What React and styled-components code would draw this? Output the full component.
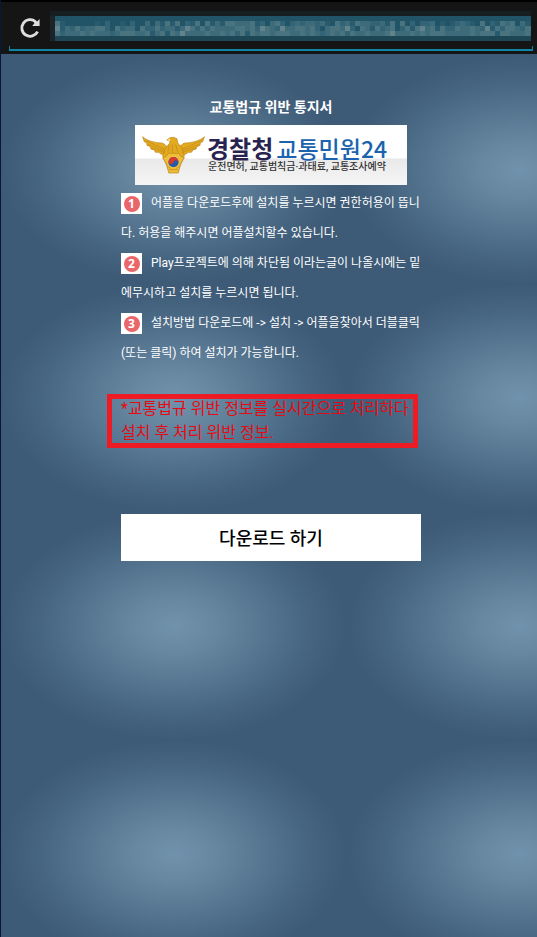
import React from "react";
import styled, { createGlobalStyle } from "styled-components";

const GlobalStyle = createGlobalStyle`
	* {
		box-sizing: border-box;
	}
	body {
		margin: 0;
		background: #3d5a76;
		font-family: Roboto, "Noto Sans CJK KR", sans-serif;
	}
`;

const Page = styled.div`
	display: flex;
	flex-direction: column;
	min-height: 100vh;
	border-left: 1px solid #0b1736;
`;

const BrowserBar = styled.header`
	background-color: #151515;
	border-top: 2px solid #000;
	padding: 9px 4px 3px 8px;
`;

const AddressRow = styled.div`
	display: flex;
	align-items: flex-start;
	gap: 6px;
	height: 35px;
	padding-left: 7px;
`;

const AddressLine = styled.div`
	height: 5px;
	border: 1px solid #13809d;
	border-top: 0;
	border-bottom: 2px solid #0e86a6;
`;

const ReloadButton = styled.button`
	display: flex;
	border: 0;
	padding: 3px 0 0;
	background: none;
	svg {
		width: 28px;
		height: 28px;
	}
`;

const MaskedAddress = styled.div`
	flex: 1;
	min-width: 0;
	height: 30px;
	margin-right: 2px;
	overflow: hidden;
	svg {
		display: block;
	}
`;

const Content = styled.main`
	flex: 1;
	display: flex;
	flex-direction: column;
	align-items: center;
	padding: 41px 0 40px 4px;
	background-image: radial-gradient(
		closest-side,
		#7192ac 0%,
		#6787a1 24%,
		#567590 52%,
		#466581 78%,
		#3d5a76 100%
	);
	background-size: 346px 228px;
	background-position: 0 2px;
`;

const Title = styled.h1`
	margin: 0 0 6px;
	font-size: 14px;
	line-height: 24px;
	font-weight: bold;
	color: #fff;
`;

const Banner = styled.div`
	display: flex;
	align-items: center;
	gap: 2px;
	width: 272px;
	height: 60px;
	padding-left: 7px;
	background: linear-gradient(#fff 33px, #e9e9e9 34px, #f5f5f5);
	white-space: nowrap;
`;

const BannerName = styled.div`
	display: flex;
	gap: 3px;
	font-family: "Noto Sans CJK KR", sans-serif;
	font-size: 24px;
	line-height: 22px;
	font-weight: bold;
	color: #29244f;
	span {
		font-size: 23px;
		font-weight: 500;
		color: #1b63ae;
	}
`;

const BannerText = styled.div`
	margin-top: 2px;
	padding-left: 1px;
	font-size: 10px;
	line-height: 12px;
	font-weight: 500;
	color: #333;
`;

const Steps = styled.section`
	width: 300px;
	margin-top: 3px;
`;

const Step = styled.p`
	margin: 0;
	font-size: 12px;
	line-height: 30px;
	color: #fff;
`;

const Badge = styled.span`
	display: inline-flex;
	align-items: center;
	justify-content: center;
	width: 21px;
	height: 21px;
	margin-right: 9px;
	background-color: #fff;
	vertical-align: middle;
`;

const Dot = styled.span`
	width: 16px;
	height: 16px;
	border-radius: 50%;
	background-color: #e9666a;
	font-family: "Open Sans", sans-serif;
	font-size: 12px;
	line-height: 16px;
	font-weight: bold;
	text-align: center;
`;

const Notice = styled.p`
	position: relative;
	width: 300px;
	margin: 29px 0 69px;
	font-size: 16px;
	line-height: 24px;
	color: #e60b12;
	&::after {
		content: "";
		position: absolute;
		inset: -3px 3px -3px -14px;
		border: 5px solid #ed1c24;
	}
`;

const DownloadButton = styled.button`
	width: 300px;
	height: 47px;
	border: 0;
	padding: 0 0 2px;
	background-color: #fff;
	font-family: inherit;
	font-size: 18px;
	font-weight: 500;
	color: #000;
`;

// brightness of each 5px block, one string per row
const MASK_ROWS = [
	"410000001020010200303141402140413144333412034202323323104231433223140402022301012321040214340310",
	"513242334420423304224233135424243333443425432533443420344352043142340241453414224334325142443244",
	"423334343332344433413414353333433434241434434443343432343424334333453334343444333334344414433343",
];
const MASK_COLORS = ["#225468", "#285b6e", "#336475", "#3e6b7a", "#4a7380", "#62838c"];

const AddressMask = () => (
	<svg width="100%" height="30" role="img" aria-label="Masked address">
		<rect width="100%" height="30" fill="#171e22" />
		<rect x="5" y="5" width="100%" height="20" fill="#225468" />
		<rect x="5" y="25" width="100%" height="5" fill="#1e4756" />
		<rect y="5" width="5" height="25" fill="#1b2529" />
		{MASK_ROWS.map((row, y) =>
			row.split("").map((level, x) => (
				<rect
					key={`${x}-${y}`}
					x={5 + x * 5}
					y={10 + y * 5}
					width="5"
					height="5"
					fill={MASK_COLORS[level]}
				/>
			))
		)}
	</svg>
);

const ReloadIcon = () => (
	<svg viewBox="0 0 28 28" fill="none">
		<path d="M21.6 17.6A8.3 8.3 0 1 1 19.6 7.7" stroke="#dedede" strokeWidth="2.8" />
		<path d="M23.6 5V12H16.2L18.3 9.6L17.6 6.8L21.4 7.2Z" fill="#dedede" />
	</svg>
);

const Emblem = () => (
	<svg width="63" height="38" viewBox="0 0 184 112">
		<g fill="#e3a91f" stroke="#b98418" strokeWidth="2" strokeLinejoin="round">
			<path d="M1 2C14 15 39 20 61 21L76 34L70 55L54 53L49 48L39 48L35 41L26 39L22 30L14 28L13 20L6 17Z" />
			<path d="M183 2C170 15 145 20 123 21L106 34L114 55L130 53L135 48L145 48L149 41L158 39L162 30L170 28L171 20L178 17Z" />
			<path d="M72 12L82 5Q92 1 102 8L105 21L116 34L124 58L119 71L112 86L104 106L80 106L72 86L65 71L60 58L68 37L80 22L82 15Z" />
			<path d="M60 64L70 60L77 51H107L114 60L124 64L113 82L106 109H78L71 82Z" fill="#edbc38" />
		</g>
		<g fill="none" stroke="#c08a1c" strokeWidth="2">
			<path d="M10 14L65 38M17 25L65 43M27 35L67 49M174 14L119 38M167 25L119 43M157 35L117 49" />
			<path d="M80 26L75 48M89 25V48M98 25L105 48M79 99H105M75 89L85 96M109 89L99 96" />
		</g>
		<path d="M72 12L82 8V15Z" fill="#fff0a0" />
		<circle cx="92" cy="77" r="18" fill="#f1c64b" />
		<circle cx="92" cy="77" r="15" fill="#285ba5" />
		<path d="M77 77A15 15 0 0 1 107 77C103 70 94 70 92 77C89 84 80 84 77 77Z" fill="#d83a2b" />
	</svg>
);

const steps = [
	"어플을 다운로드후에 설치를 누르시면 권한허용이 뜹니다. 허용을 해주시면 어플설치할수 있습니다.",
	"Play프로젝트에 의해 차단됨 이라는글이 나올시에는 밑에무시하고 설치를 누르시면 됩니다.",
	"설치방법 다운로드에 -> 설치 -> 어플을찾아서 더블클릭(또는 클릭) 하여 설치가 가능합니다.",
];

const App = () => {
	return (
		<Page lang="ko">
			<GlobalStyle />
			<BrowserBar>
				<AddressRow>
					<ReloadButton type="button" aria-label="Reload">
						<ReloadIcon />
					</ReloadButton>
					<MaskedAddress>
						<AddressMask />
					</MaskedAddress>
				</AddressRow>
				<AddressLine />
			</BrowserBar>
			<Content>
				<Title>교통법규 위반 통지서</Title>
				<Banner>
					<Emblem />
					<div>
						<BannerName>
							경찰청<span>교통민원24</span>
						</BannerName>
						<BannerText>운전면허, 교통범칙금·과태료, 교통조사예약</BannerText>
					</div>
				</Banner>
				<Steps>
					{steps.map((text, index) => (
						<Step key={text}>
							<Badge>
								<Dot>{index + 1}</Dot>
							</Badge>
							{text}
						</Step>
					))}
				</Steps>
				<Notice>*교통법규 위반 정보를 실시간으로 처리하다 설치 후 처리 위반 정보.</Notice>
				<DownloadButton type="button">다운로드 하기</DownloadButton>
			</Content>
		</Page>
	);
};

export default App;
